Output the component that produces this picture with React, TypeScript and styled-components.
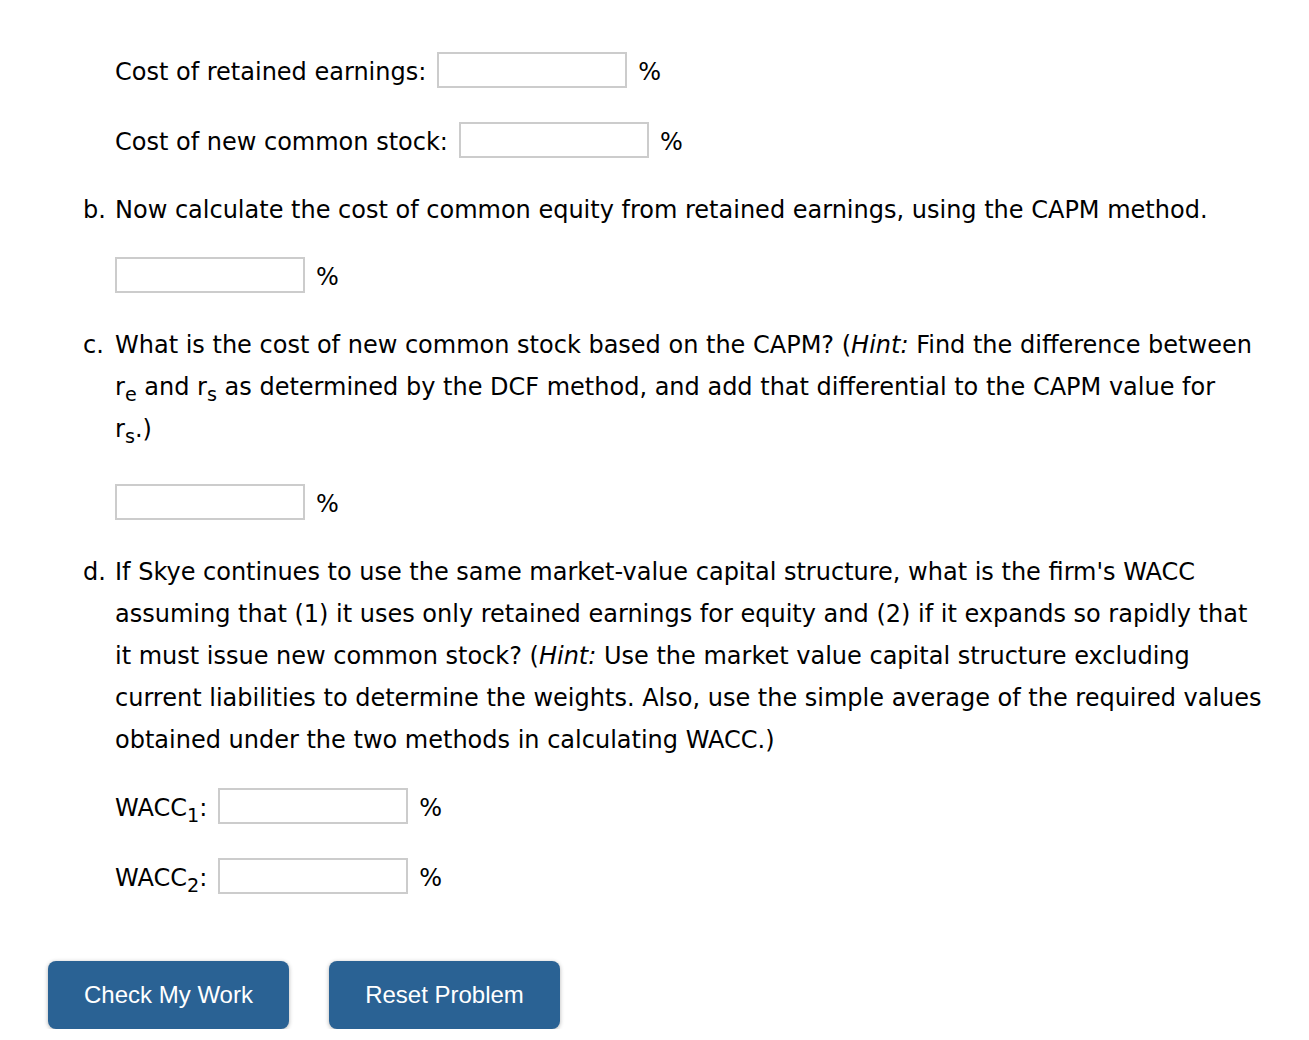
import React from "react"
import styled, { createGlobalStyle } from "styled-components"

const Global = createGlobalStyle`
  body {
    margin: 0;
    background: #fff;
    color: #000;
    font-family: "DejaVu Sans", Verdana, sans-serif;
    font-size: 24px;
  }
`

const Page = styled.div`
  padding: 52px 0 0 48px;
  width: 1261px;
  box-sizing: border-box;
`

const Section = styled.div`
  padding-left: 35px;
`

const Row = styled.div<{ $top?: number }>`
  display: flex;
  align-items: center;
  gap: 11px;
  height: 36px;
  margin-top: ${(p) => p.$top ?? 0}px;
  margin-left: 32px;
  line-height: 36px;
`

const Label = styled.span`
  white-space: nowrap;
  padding-top: 3px;
`

const Percent = styled.span`
  padding-top: 3px;
`

const Field = styled.input`
  width: 190px;
  height: 36px;
  box-sizing: border-box;
  border: 2px solid #cccccc;
  background: #fff;
  padding: 0 6px;
  font: inherit;
  outline: none;
`

const Item = styled.div<{ $top?: number }>`
  display: grid;
  grid-template-columns: 32px 1fr;
  line-height: 42px;
  padding-top: 1px;
  margin-top: ${(p) => p.$top ?? 0}px;
`

const Letter = styled.span``

const Text = styled.p`
  margin: 0;
  white-space: nowrap;
`

const Sub = styled.sub`
  font-size: 0.8em;
  vertical-align: -0.3em;
  line-height: 0;
`

const Buttons = styled.div`
  display: flex;
  gap: 40px;
  margin-top: 67px;
`

const Button = styled.button<{ $w: number }>`
  width: ${(p) => p.$w}px;
  height: 68px;
  border: none;
  border-radius: 8px;
  background: #2a6294;
  color: #fff;
  font-family: "Liberation Sans", Arial, sans-serif;
  font-size: 24px;
  box-shadow: 0 1px 4px rgba(0, 0, 0, 0.3);
  cursor: pointer;
`

const Pct = () => <Percent>%</Percent>

export default function App() {
  return (
    <Page>
      <Global />
      <Section>
        <Row>
          <Label>Cost of retained earnings:</Label>
          <Field />
          <Pct />
        </Row>
        <Row $top={34}>
          <Label>Cost of new common stock:</Label>
          <Field />
          <Pct />
        </Row>

        <Item $top={30}>
          <Letter>b.</Letter>
          <Text>Now calculate the cost of common equity from retained earnings, using the CAPM method.</Text>
        </Item>
        <Row $top={26}>
          <Field />
          <Pct />
        </Row>

        <Item $top={30}>
          <Letter>c.</Letter>
          <Text>
            What is the cost of new common stock based on the CAPM? (<i>Hint:</i> Find the difference between
            <br />
            r<Sub>e</Sub> and r<Sub>s</Sub> as determined by the DCF method, and add that differential to the CAPM value for
            <br />
            r<Sub>s</Sub>.)
          </Text>
        </Item>
        <Row $top={34}>
          <Field />
          <Pct />
        </Row>

        <Item $top={30}>
          <Letter>d.</Letter>
          <Text>
            If Skye continues to use the same market-value capital structure, what is the firm's WACC
            <br />
            assuming that (1) it uses only retained earnings for equity and (2) if it expands so rapidly that
            <br />
            it must issue new common stock? (<i>Hint:</i> Use the market value capital structure excluding
            <br />
            current liabilities to determine the weights. Also, use the simple average of the required values
            <br />
            obtained under the two methods in calculating WACC.)
          </Text>
        </Item>
        <Row $top={27}>
          <Label>
            WACC<Sub>1</Sub>:
          </Label>
          <Field />
          <Pct />
        </Row>
        <Row $top={34}>
          <Label>
            WACC<Sub>2</Sub>:
          </Label>
          <Field />
          <Pct />
        </Row>
      </Section>

      <Buttons>
        <Button $w={241}>Check My Work</Button>
        <Button $w={231}>Reset Problem</Button>
      </Buttons>
    </Page>
  )
}
